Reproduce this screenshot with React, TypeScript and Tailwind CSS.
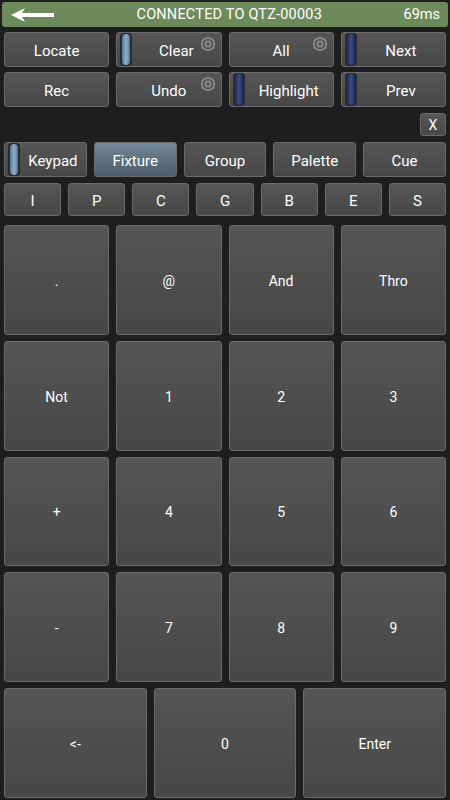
import type { ReactNode } from "react"

type Ind = "light" | "dark" | undefined

function Indicator({ kind }: { kind: Ind }) {
  if (!kind) return null
  return (
    <div className="ml-[3px] flex h-[33px] w-[12px] shrink-0 items-center justify-center rounded-[4px] bg-[#2a2a2a]">
      <div
        className={
          kind === "light"
            ? "h-[31px] w-[8px] rounded-full bg-gradient-to-r from-[#4d7596] via-[#8fb3cc] to-[#4d7596]"
            : "h-[31px] w-[8px] rounded-full bg-gradient-to-r from-[#1f2a55] via-[#3d4c88] to-[#1f2a55]"
        }
      />
    </div>
  )
}

function Target() {
  return (
    <svg className="absolute right-[5px] top-[3px]" width="16" height="16" viewBox="0 0 16 16">
      <circle cx="8" cy="8" r="6.2" fill="none" stroke="#8c8c8c" strokeWidth="1.8" />
      <circle cx="8" cy="8" r="2.6" fill="none" stroke="#8c8c8c" strokeWidth="1.6" />
    </svg>
  )
}

function Btn({
  children,
  ind,
  target,
  active,
}: {
  children: ReactNode
  ind?: Ind
  target?: boolean
  active?: boolean
}) {
  return (
    <div
      className={
        "relative flex min-w-0 flex-1 items-center rounded-[3px] border border-[#6b6b6b] text-[15px] text-white " +
        (active
          ? "bg-gradient-to-b from-[#73889a] to-[#4b5c69]"
          : "bg-gradient-to-b from-[#565656] to-[#474747]")
      }
    >
      <Indicator kind={ind} />
      <span className="flex-1 pt-[3px] text-center">{children}</span>
      {target && <Target />}
    </div>
  )
}

function Key({ label }: { label: string }) {
  return (
    <div className="flex flex-1 items-center justify-center rounded-[3px] border border-[#6b6b6b] bg-gradient-to-b from-[#555555] to-[#474747] pt-[3px] text-[14px] text-white">
      {label}
    </div>
  )
}

export default function App() {
  const pad = [
    [".", "@", "And", "Thro"],
    ["Not", "1", "2", "3"],
    ["+", "4", "5", "6"],
    ["-", "7", "8", "9"],
  ]
  return (
    <div
      className="flex h-[800px] w-[450px] flex-col bg-[#1e1e1e]"
      style={{ fontFamily: "Roboto, 'Noto Sans', sans-serif" }}
    >
      <div className="px-[2px] pt-[2px]">
        <div className="flex h-[25px] items-center rounded-[3px] bg-[#6d8a5b] pl-[9px] pr-[8px] text-[14.5px] text-white">
          <svg width="44" height="14" viewBox="0 0 44 14">
            <path d="M0 7 L14 0 L11 5 L43 5 L43 9 L11 9 L14 14 Z" fill="#ffffff" />
          </svg>
          <span className="flex-1 pt-[1px] text-center tracking-[0.2px]">CONNECTED TO QTZ-00003</span>
          <span className="pt-[1px]">69ms</span>
        </div>
      </div>

      <div className="mt-[5px] flex h-[35px] gap-[7px] px-[4px]">
        <Btn>Locate</Btn>
        <Btn ind="light" target>Clear</Btn>
        <Btn target>All</Btn>
        <Btn ind="dark">Next</Btn>
      </div>
      <div className="mt-[5px] flex h-[35px] gap-[7px] px-[4px]">
        <Btn>Rec</Btn>
        <Btn target>Undo</Btn>
        <Btn ind="dark">Highlight</Btn>
        <Btn ind="dark">Prev</Btn>
      </div>

      <div className="mt-[6px] flex justify-end px-[4px]">
        <div className="flex h-[23px] w-[26px] items-center justify-center rounded-[3px] border border-[#6b6b6b] bg-gradient-to-b from-[#565656] to-[#474747] pt-[2px] text-[14px] text-white">
          X
        </div>
      </div>

      <div className="mt-[6px] flex h-[35px] gap-[7px] px-[4px]">
        <Btn ind="light">Keypad</Btn>
        <Btn active>Fixture</Btn>
        <Btn>Group</Btn>
        <Btn>Palette</Btn>
        <Btn>Cue</Btn>
      </div>

      <div className="mt-[6px] flex h-[33px] gap-[7px] px-[4px]">
        {["I", "P", "C", "G", "B", "E", "S"].map((l) => (
          <Btn key={l}>{l}</Btn>
        ))}
      </div>

      <div className="mt-[9px] mb-[2px] flex flex-1 flex-col gap-[6px] px-[4px]">
        {pad.map((row, i) => (
          <div key={i} className="flex flex-1 gap-[7px]">
            {row.map((k) => (
              <Key key={k} label={k} />
            ))}
          </div>
        ))}
        <div className="flex flex-1 gap-[7px]">
          <Key label="<-" />
          <Key label="0" />
          <Key label="Enter" />
        </div>
      </div>
    </div>
  )
}
